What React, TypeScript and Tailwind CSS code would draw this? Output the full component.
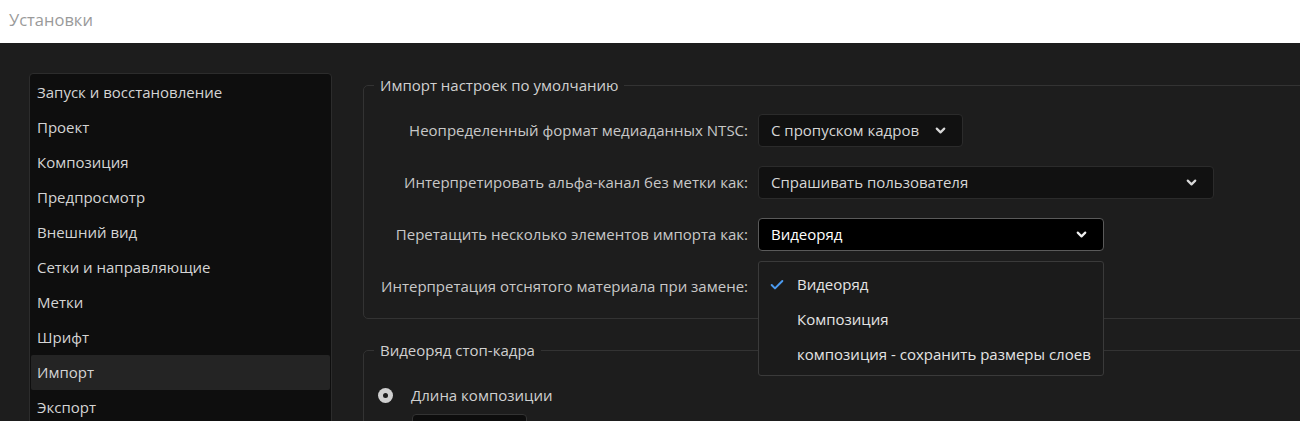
import { ChevronDown, Check } from "lucide-react";

const sidebarItems = [
  "Запуск и восстановление",
  "Проект",
  "Композиция",
  "Предпросмотр",
  "Внешний вид",
  "Сетки и направляющие",
  "Метки",
  "Шрифт",
  "Импорт",
  "Экспорт",
];

function Dropdown({
  value,
  width,
  active = false,
}: {
  value: string;
  width: string;
  active?: boolean;
}) {
  return (
    <div
      className={
        "flex items-center justify-between h-[33px] rounded-[4px] pl-[12px] pr-[14px] border " +
        width +
        (active
          ? " bg-black border-[#5a5a5a] text-white"
          : " bg-[#111111] border-[#2b2b2b] text-[#d6d6d6]")
      }
    >
      <span className="text-[15px] whitespace-nowrap">{value}</span>
      <ChevronDown size={15} strokeWidth={3.5} color={active ? "#f0f0f0" : "#d8d8d8"} />
    </div>
  );
}

export default function App() {
  return (
    <div className="w-[1300px] h-[421px] overflow-hidden flex flex-col font-['Open_Sans',sans-serif]">
      <div className="h-[43px] shrink-0 bg-white flex items-center pl-[9px] pb-[2px] text-[16.5px] text-[#9a9a9a]">
        Установки
      </div>
      <div className="flex-1 min-h-0 bg-[#1d1d1d] flex pl-[29px] pt-[30px] overflow-hidden">
        <div className="w-[303px] shrink-0 self-start h-[420px] bg-[#0e0e0e] border border-[#2c2c2c] rounded-[4px] p-[1px]">
          {sidebarItems.map((it) => (
            <div
              key={it}
              className={
                "h-[35px] flex items-center pl-[6px] text-[15px] text-[#d4d4d4] rounded-[2px]" +
                (it === "Импорт" ? " bg-[#242424]" : "")
              }
            >
              {it}
            </div>
          ))}
        </div>

        <div className="ml-[31px] w-[1000px] shrink-0">
          <fieldset className="border border-[#333333] rounded-[5px] px-[10px] pb-[15px] mt-[2px]">
            <legend className="px-[6px] text-[15px] leading-[20px] text-[#d0d0d0]">
              Импорт настроек по умолчанию
            </legend>
            <div className="pt-[19px] flex flex-col gap-[19px]">
              <div className="flex items-center h-[33px]">
                <div className="w-[374px] text-right text-[15px] text-[#c8c8c8] whitespace-nowrap">
                  Неопределенный формат медиаданных NTSC:
                </div>
                <div className="ml-[10px]">
                  <Dropdown value="С пропуском кадров" width="w-[205px]" />
                </div>
              </div>
              <div className="flex items-center h-[33px]">
                <div className="w-[374px] text-right text-[15px] text-[#c8c8c8] whitespace-nowrap">
                  Интерпретировать альфа-канал без метки как:
                </div>
                <div className="ml-[10px]">
                  <Dropdown value="Спрашивать пользователя" width="w-[456px]" />
                </div>
              </div>
              <div className="flex items-center h-[33px]">
                <div className="w-[374px] text-right text-[15px] text-[#c8c8c8] whitespace-nowrap">
                  Перетащить несколько элементов импорта как:
                </div>
                <div className="ml-[10px] relative">
                  <Dropdown value="Видеоряд" width="w-[346px]" active />
                  <div className="absolute z-10 left-0 top-[43px] w-[346px] h-[115px] bg-[#1b1b1b] border border-[#3a3a3a] rounded-[3px] pt-[5px]">
                    {[
                      "Видеоряд",
                      "Композиция",
                      "композиция - сохранить размеры слоев",
                    ].map((o, i) => (
                      <div key={o} className="h-[35px] flex items-center pl-[10px] text-[15px] text-[#e4e4e4]">
                        <div className="w-[28px] flex items-center">
                          {i === 0 && <Check size={16} strokeWidth={3} color="#4c9bf0" />}
                        </div>
                        <span className="whitespace-nowrap">{o}</span>
                      </div>
                    ))}
                  </div>
                </div>
              </div>
              <div className="flex items-center h-[33px]">
                <div className="w-[374px] text-right text-[15px] text-[#c8c8c8] whitespace-nowrap">
                  Интерпретация отснятого материала при замене:
                </div>
                <div className="ml-[10px] w-[346px] h-[33px]" />
              </div>
            </div>
          </fieldset>

          <fieldset className="border border-[#333333] rounded-[5px] px-[10px] pb-[15px] mt-[21px]">
            <legend className="px-[6px] text-[15px] leading-[20px] text-[#d0d0d0]">
              Видеоряд стоп-кадра
            </legend>
            <div className="pt-[25px] flex items-center h-[20px] box-content">
              <div className="ml-[4px] w-[15px] h-[15px] rounded-full bg-[#cfcfcf] flex items-center justify-center">
                <div className="w-[5px] h-[5px] rounded-full bg-[#1d1d1d]" />
              </div>
              <span className="ml-[18px] text-[15px] text-[#d0d0d0]">Длина композиции</span>
            </div>
            <div className="mt-[9px] ml-[38px] w-[115px] h-[30px] bg-[#0d0d0d] border border-[#333333] rounded-[4px]" />
          </fieldset>
        </div>
      </div>
    </div>
  );
}
